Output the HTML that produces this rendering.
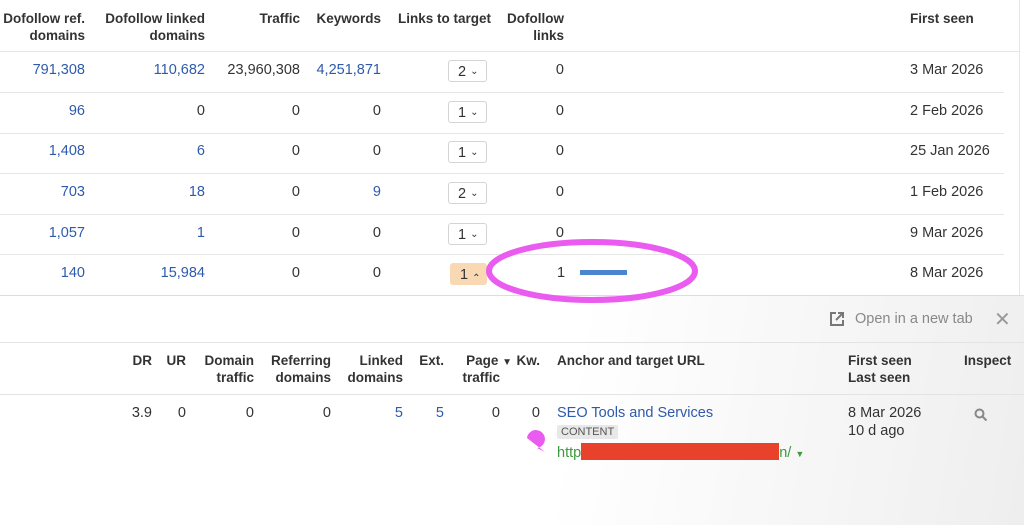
<!DOCTYPE html><html><head><style>
body{margin:0;width:1024px;height:524px;overflow:hidden;background:#fff;font-family:"Liberation Sans",sans-serif;font-size:14.5px;color:#333;position:relative}
.a{position:absolute;white-space:nowrap}
.r{text-align:right}
.h{font-weight:bold;font-size:13.5px;line-height:17px;color:#333}
.l{color:#2e5aac}
.line{position:absolute;height:1px;background:#e6e6e6;left:0}
.dd{position:absolute;width:39px;height:22px;border:1px solid #d4d4d4;border-radius:3px;background:#fff;font-size:14.5px;line-height:22px;box-sizing:border-box;padding-left:9px}
.dd span{font-size:10px;margin-left:4px;vertical-align:2px}
</style></head><body>
<div class="a h r" style="right:939px;top:10px">Dofollow ref.<br>domains</div>
<div class="a h r" style="right:819px;top:10px">Dofollow linked<br>domains</div>
<div class="a h r" style="right:724px;top:10px">Traffic</div>
<div class="a h r" style="right:643px;top:10px">Keywords</div>
<div class="a h" style="left:398px;top:10px">Links to target</div>
<div class="a h r" style="right:460px;top:10px">Dofollow<br>links</div>
<div class="a h" style="left:910px;top:10px">First seen</div>
<div class="line" style="top:51px;width:1020px"></div>
<div class="line" style="top:92px;width:1004px"></div>
<div class="line" style="top:133px;width:1004px"></div>
<div class="line" style="top:173px;width:1004px"></div>
<div class="line" style="top:214px;width:1004px"></div>
<div class="line" style="top:254px;width:1004px"></div>
<div style="position:absolute;left:1019px;top:0;width:1px;height:295px;background:#e6e6e6"></div>

<div class="a r l" style="right:939px;top:62px">791,308</div><div class="a r l" style="right:819px;top:62px">110,682</div><div class="a r" style="right:724px;top:62px">23,960,308</div><div class="a r l" style="right:643px;top:62px">4,251,871</div><div class="dd" style="left:448px;top:60px">2<span>&#8964;</span></div><div class="a r" style="right:460px;top:62px">0</div><div class="a" style="left:910px;top:62px">3 Mar 2026</div>
<div class="a r l" style="right:939px;top:103px">96</div><div class="a r" style="right:819px;top:103px">0</div><div class="a r" style="right:724px;top:103px">0</div><div class="a r" style="right:643px;top:103px">0</div><div class="dd" style="left:448px;top:101px">1<span>&#8964;</span></div><div class="a r" style="right:460px;top:103px">0</div><div class="a" style="left:910px;top:103px">2 Feb 2026</div>
<div class="a r l" style="right:939px;top:143px">1,408</div><div class="a r l" style="right:819px;top:143px">6</div><div class="a r" style="right:724px;top:143px">0</div><div class="a r" style="right:643px;top:143px">0</div><div class="dd" style="left:448px;top:141px">1<span>&#8964;</span></div><div class="a r" style="right:460px;top:143px">0</div><div class="a" style="left:910px;top:143px">25 Jan 2026</div>
<div class="a r l" style="right:939px;top:184px">703</div><div class="a r l" style="right:819px;top:184px">18</div><div class="a r" style="right:724px;top:184px">0</div><div class="a r l" style="right:643px;top:184px">9</div><div class="dd" style="left:448px;top:182px">2<span>&#8964;</span></div><div class="a r" style="right:460px;top:184px">0</div><div class="a" style="left:910px;top:184px">1 Feb 2026</div>
<div class="a r l" style="right:939px;top:225px">1,057</div><div class="a r l" style="right:819px;top:225px">1</div><div class="a r" style="right:724px;top:225px">0</div><div class="a r" style="right:643px;top:225px">0</div><div class="dd" style="left:448px;top:223px">1<span>&#8964;</span></div><div class="a r" style="right:460px;top:225px">0</div><div class="a" style="left:910px;top:225px">9 Mar 2026</div>
<div class="a r l" style="right:939px;top:265px">140</div><div class="a r l" style="right:819px;top:265px">15,984</div><div class="a r" style="right:724px;top:265px">0</div><div class="a r" style="right:643px;top:265px">0</div><div class="dd" style="left:450px;top:263px;background:#f8d9b4;border-color:#f8d9b4;width:37px">1<span style="vertical-align:-2px">&#8963;</span></div><div class="a" style="left:557px;top:265px">1</div><div style="position:absolute;left:580px;top:270px;width:47px;height:5px;background:#4a86d0"></div><div class="a" style="left:910px;top:265px">8 Mar 2026</div>

<div style="position:absolute;left:0;top:295px;width:1024px;height:229px;background:linear-gradient(100deg,#fff 55%,#f4f4f4 85%,#eeeeee);border-top:1px solid #ddd"></div>
<svg class="a" style="left:829px;top:311px" width="16" height="16" viewBox="0 0 16 16" fill="none" stroke="#777" stroke-width="2"><path d="M7 2H2v12h12V9"/><path d="M9 2h5v5M14 2L7 9"/></svg>
<div class="a" style="left:855px;top:311px;color:#888">Open in a new tab</div>
<div class="a" style="left:994px;top:307px;color:#999;font-size:20px">&#10005;</div>
<div class="line" style="top:342px;width:1024px;background:#e3e3e3"></div>
<div class="a h r" style="right:872px;top:352px">DR</div>
<div class="a h r" style="right:838px;top:352px">UR</div>
<div class="a h r" style="right:770px;top:352px">Domain<br>traffic</div>
<div class="a h r" style="right:693px;top:352px">Referring<br>domains</div>
<div class="a h r" style="right:621px;top:352px">Linked<br>domains</div>
<div class="a h r" style="right:580px;top:352px">Ext.</div>
<div class="a h r" style="right:512px;top:352px">Page <span style="font-size:10px">&#9660;</span></div>
<div class="a h r" style="right:524px;top:369px">traffic</div>
<div class="a h r" style="right:484px;top:352px">Kw.</div>
<div class="a h" style="left:557px;top:352px">Anchor and target URL</div>
<div class="a h" style="left:848px;top:352px">First seen<br>Last seen</div>
<div class="a h" style="left:964px;top:352px">Inspect</div>
<div class="line" style="top:394px;width:1024px;background:#e3e3e3"></div>
<div class="a r" style="right:872px;top:405px">3.9</div><div class="a r" style="right:838px;top:405px">0</div><div class="a r" style="right:770px;top:405px">0</div><div class="a r" style="right:693px;top:405px">0</div><div class="a r l" style="right:621px;top:405px">5</div><div class="a r l" style="right:580px;top:405px">5</div><div class="a r" style="right:524px;top:405px">0</div><div class="a r" style="right:484px;top:405px">0</div>
<div class="a l" style="left:557px;top:405px">SEO Tools and Services</div>
<div class="a" style="left:557px;top:425px;background:#e8e8e8;color:#555;font-size:11px;padding:1px 4px;border-radius:2px">CONTENT</div>
<div class="a" style="left:557px;top:443px;color:#3d9a3d">http<span style="display:inline-block;width:198px;height:17px;background:#e8412c;vertical-align:-3px"></span>n/ <span style="font-size:9px">&#9660;</span></div>
<div class="a" style="left:848px;top:405px">8 Mar 2026<br><span style="line-height:20px">10 d ago</span></div>
<svg class="a" style="left:974px;top:408px" width="14" height="14" viewBox="0 0 14 14" fill="none" stroke="#888" stroke-width="2"><circle cx="5.5" cy="5.5" r="4"/><path d="M8.5 8.5L12.5 12.5"/></svg>
<svg class="a" style="left:0;top:0" width="1024" height="524"><ellipse cx="592" cy="271" rx="103" ry="29" fill="none" stroke="#ea5bf0" stroke-width="6"/><path d="M527 438a9 9 0 1 1 10 10l8 4z" fill="#ea5bf0"/></svg>
</body></html>
